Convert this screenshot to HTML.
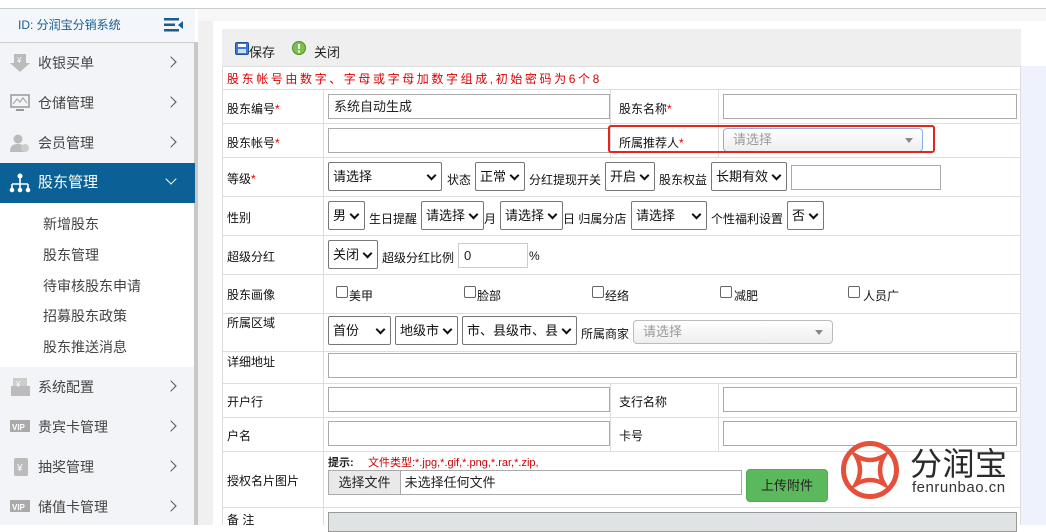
<!DOCTYPE html><html><head><meta charset="utf-8"><style>
*{box-sizing:border-box;margin:0;padding:0}
body{width:1046px;height:525px;overflow:hidden;background:#fff;font-family:"Liberation Sans","Noto Sans CJK SC",sans-serif;font-size:12px;color:#222;position:relative}
.a{position:absolute}
.side{left:0;top:9px;width:195px;height:516px;background:#f3f4f8}
.mi{position:absolute;left:0;width:195px;height:40px;font-size:14px;color:#444;line-height:40px}
.mi .t{position:absolute;left:38px}
.mi .ar{position:absolute;left:167px;top:15px;width:8px;height:8px;border-right:1.3px solid #555;border-top:1.3px solid #555;transform:rotate(45deg)}
.sub{position:absolute;left:43px;font-size:14px;color:#444}
.lbl{position:absolute;font-size:12px;color:#111}
.req{color:#d00}
.inp{position:absolute;border:1px solid #aaa;background:#fff;height:25px;font-size:13px;line-height:23px;padding-left:5px}
.sel{position:absolute;border:1px solid #777;border-radius:2px;background:#fff;height:29px;font-size:13px;line-height:27px;padding-left:4px;color:#111}
.sel:after{content:"";position:absolute;right:6px;top:9px;width:5px;height:5px;border-right:2px solid #111;border-bottom:2px solid #111;transform:rotate(45deg)}
.hl{position:absolute;left:222px;width:799px;height:1px;background:#ddd}
.vl{position:absolute;width:1px;background:#ddd}
.cb{position:absolute;width:12px;height:12px;border:1px solid #666;border-radius:2px;background:#fff}
.ch{position:absolute;border:1px solid #bbb;border-radius:4px;height:24px;background:linear-gradient(#fff,#eee);color:#999;font-size:13px;line-height:22px;padding-left:9px}
.ch:after{content:"";position:absolute;right:9px;top:9px;border-left:4px solid transparent;border-right:4px solid transparent;border-top:5px solid #888}
</style></head><body>
<div class="a" style="left:0;top:8px;width:1046px;height:1px;background:#ccc"></div>
<div class="a side"></div>
<div class="a" style="left:0;top:9px;width:195px;height:33px;background:#f3f6fa"></div>
<div class="a" style="left:18px;top:16px;font-size:12px;color:#1a5d8f">ID: 分润宝分销系统</div>
<svg class="a" style="left:164px;top:18px" width="20" height="14"><rect x="0" y="0" width="15" height="2.5" fill="#1a5d8f"/><rect x="0" y="5.5" width="11" height="2.5" fill="#1a5d8f"/><rect x="0" y="11" width="15" height="2.5" fill="#1a5d8f"/><path d="M19 3v8l-5-4z" fill="#1a5d8f"/></svg>
<div class="a" style="left:0;top:42px;width:195px;height:1px;background:#ccc"></div>
<div class="a" style="left:194px;top:42px;width:4px;height:483px;background:#c8c8c8"></div>
<div class="a" style="left:198px;top:9px;width:848px;height:516px;background:#f0f0f0"></div>
<div class="a" style="left:198px;top:9px;width:848px;height:12px;background:#f7f7f7"></div>
<div class="a" style="left:213px;top:21px;width:833px;height:504px;background:#fff"></div>
<div class="a" style="left:222px;top:29px;width:799px;height:37px;background:#efefef"></div>
<div class="a" style="left:1021px;top:66px;width:25px;height:459px;background:#eef2fc"></div>

<div class="mi" style="top:43px"><svg class="a" style="left:10px;top:11px" width="20" height="18"><path d="M4 0h12v9h4l-10 9-10-9h4z" fill="#bbb"/><text x="7" y="9" font-size="8" fill="#fff">¥</text></svg><span class="t">收银买单</span><i class="ar"></i></div>
<div class="mi" style="top:83px"><svg class="a" style="left:10px;top:11px" width="20" height="18"><rect x="1" y="1" width="18" height="12" fill="none" stroke="#999" stroke-width="1.5"/><path d="M3 10l4-5 3 3 3-4 4 5" fill="none" stroke="#999"/><rect x="6" y="15" width="8" height="2" fill="#999"/></svg><span class="t">仓储管理</span><i class="ar"></i></div>
<div class="mi" style="top:123px"><svg class="a" style="left:10px;top:11px" width="20" height="18"><circle cx="8" cy="5" r="4.5" fill="#bbb"/><path d="M0 18c0-7 4-8 8-8s6 2 7 3v5z" fill="#bbb"/><circle cx="15" cy="14" r="4" fill="#ccc"/></svg><span class="t">会员管理</span><i class="ar"></i></div>
<div class="mi" style="top:163px;background:#0b6195;color:#fff"><svg class="a" style="left:9px;top:10px" width="22" height="20"><circle cx="11" cy="3" r="2.5" fill="#fff"/><path d="M11 5v6M3 11h16M3 11v5M11 11v5M19 11v5" stroke="#fff" stroke-width="1.6" fill="none"/><circle cx="3" cy="17" r="2.3" fill="#fff"/><circle cx="11" cy="17" r="2.3" fill="#fff"/><circle cx="19" cy="17" r="2.3" fill="#fff"/></svg><span class="t" style="font-size:15px">股东管理</span><i class="ar" style="border-color:#fff;transform:rotate(135deg);top:12px"></i></div>
<div class="a" style="left:0;top:203px;width:194px;height:164px;background:#fff"></div>
<div class="sub" style="top:214px">新增股东</div>
<div class="sub" style="top:245px">股东管理</div>
<div class="sub" style="top:276px">待审核股东申请</div>
<div class="sub" style="top:306px">招募股东政策</div>
<div class="sub" style="top:337px">股东推送消息</div>
<div class="mi" style="top:367px"><svg class="a" style="left:11px;top:11px" width="20" height="18"><rect x="2" y="0" width="14" height="11" fill="#ccc"/><rect x="0" y="8" width="19" height="10" fill="#bbb"/><text x="5" y="9" font-size="8" fill="#fff">¥</text></svg><span class="t">系统配置</span><i class="ar"></i></div>
<div class="mi" style="top:407px"><svg class="a" style="left:10px;top:13px" width="20" height="14"><rect width="20" height="12" fill="#aaa"/><text x="2" y="10" font-size="8" font-weight="bold" fill="#fff">VIP</text></svg><span class="t">贵宾卡管理</span><i class="ar"></i></div>
<div class="mi" style="top:447px"><svg class="a" style="left:12px;top:11px" width="18" height="18"><rect x="2" y="0" width="14" height="18" rx="2" fill="#bbb"/><text x="5" y="13" font-size="10" fill="#fff">¥</text></svg><span class="t">抽奖管理</span><i class="ar"></i></div>
<div class="mi" style="top:487px"><svg class="a" style="left:10px;top:13px" width="20" height="14"><rect width="20" height="12" fill="#aaa"/><text x="2" y="10" font-size="8" font-weight="bold" fill="#fff">VIP</text></svg><span class="t">储值卡管理</span><i class="ar"></i></div>

<svg class="a" style="left:235px;top:42px" width="14" height="13"><rect x="0.5" y="0.5" width="13" height="12" rx="1.5" fill="#3b7ad8" stroke="#1d4f9a"/><rect x="3" y="2" width="8" height="3" fill="#fff"/><rect x="3" y="7" width="8" height="4" fill="#cde"/></svg>
<div class="a" style="left:249px;top:42px;font-size:13px">保存</div>
<svg class="a" style="left:292px;top:41px" width="14" height="14"><circle cx="7" cy="7" r="6.5" fill="#7cc24a" stroke="#4a8f2a"/><rect x="6" y="3" width="2" height="5" fill="#fff"/><rect x="6" y="9.5" width="2" height="2" fill="#fff"/></svg>
<div class="a" style="left:314px;top:42px;font-size:13px">关闭</div>

<div class="a" style="left:222px;top:66px;width:799px;height:459px;border:1px solid #ddd;border-bottom:0"></div>
<div class="hl" style="top:89px"></div><div class="hl" style="top:123px"></div><div class="hl" style="top:157px"></div><div class="hl" style="top:196px"></div><div class="hl" style="top:235px"></div><div class="hl" style="top:274px"></div><div class="hl" style="top:313px"></div><div class="hl" style="top:351px"></div><div class="hl" style="top:383px"></div><div class="hl" style="top:417px"></div><div class="hl" style="top:451px"></div><div class="hl" style="top:507px"></div>
<div class="vl" style="left:323px;top:89px;height:436px"></div>
<div class="vl" style="left:610px;top:89px;height:68px"></div><div class="vl" style="left:718px;top:89px;height:68px"></div>
<div class="vl" style="left:610px;top:383px;height:68px"></div><div class="vl" style="left:718px;top:383px;height:68px"></div>

<div class="a" style="left:227px;top:70px;color:#d00;font-size:12px;letter-spacing:2.6px">股东帐号由数字、字母或字母加数字组成,初始密码为6个8</div>
<div class="lbl" style="left:227px;top:100px">股东编号<span class="req">*</span></div>
<div class="inp" style="left:328px;top:94px;width:282px">系统自动生成</div>
<div class="lbl" style="left:619px;top:100px">股东名称<span class="req">*</span></div>
<div class="inp" style="left:723px;top:94px;width:294px"></div>
<div class="lbl" style="left:227px;top:134px">股东帐号<span class="req">*</span></div>
<div class="inp" style="left:328px;top:128px;width:282px"></div>
<div class="lbl" style="left:619px;top:134px">所属推荐人<span class="req">*</span></div>
<div class="ch" style="left:723px;top:128px;width:200px;border-color:#8ab0e8">请选择</div>
<div class="a" style="left:608px;top:125px;width:327px;height:28px;border:2.5px solid #e3261d;border-radius:3px"></div>

<div class="lbl" style="left:227px;top:170px">等级<span class="req">*</span></div>
<div class="sel" style="left:328px;top:162px;width:114px">请选择</div>
<div class="lbl" style="left:447px;top:171px">状态</div>
<div class="sel" style="left:475px;top:162px;width:50px">正常</div>
<div class="lbl" style="left:529px;top:171px">分红提现开关</div>
<div class="sel" style="left:605px;top:162px;width:50px">开启</div>
<div class="lbl" style="left:659px;top:171px">股东权益</div>
<div class="sel" style="left:711px;top:162px;width:76px">长期有效</div>
<div class="inp" style="left:791px;top:165px;width:150px"></div>

<div class="lbl" style="left:227px;top:209px">性别</div>
<div class="sel" style="left:328px;top:201px;width:37px">男</div>
<div class="lbl" style="left:369px;top:210px">生日提醒</div>
<div class="sel" style="left:421px;top:201px;width:63px">请选择</div>
<div class="lbl" style="left:484px;top:210px">月</div>
<div class="sel" style="left:500px;top:201px;width:63px">请选择</div>
<div class="lbl" style="left:563px;top:210px">日 归属分店</div>
<div class="sel" style="left:631px;top:201px;width:76px">请选择</div>
<div class="lbl" style="left:711px;top:210px">个性福利设置</div>
<div class="sel" style="left:787px;top:201px;width:37px">否</div>

<div class="lbl" style="left:227px;top:248px">超级分红</div>
<div class="sel" style="left:328px;top:240px;width:50px">关闭</div>
<div class="lbl" style="left:382px;top:249px">超级分红比例</div>
<div class="inp" style="left:458px;top:243px;width:70px;height:25px;border-color:#ccc">0</div>
<div class="lbl" style="left:529px;top:249px">%</div>

<div class="lbl" style="left:227px;top:286px">股东画像</div>
<div class="cb" style="left:336px;top:286px"></div><div class="lbl" style="left:349px;top:287px">美甲</div>
<div class="cb" style="left:464px;top:286px"></div><div class="lbl" style="left:477px;top:287px">脸部</div>
<div class="cb" style="left:592px;top:286px"></div><div class="lbl" style="left:605px;top:287px">经络</div>
<div class="cb" style="left:720px;top:286px"></div><div class="lbl" style="left:734px;top:287px">减肥</div>
<div class="cb" style="left:848px;top:286px"></div><div class="lbl" style="left:863px;top:287px">人员广</div>

<div class="lbl" style="left:227px;top:314px">所属区域</div>
<div class="sel" style="left:328px;top:316px;width:63px">首份</div>
<div class="sel" style="left:395px;top:316px;width:63px">地级市</div>
<div class="sel" style="left:462px;top:316px;width:115px">市、县级市、县</div>
<div class="lbl" style="left:581px;top:325px">所属商家</div>
<div class="ch" style="left:633px;top:320px;width:200px">请选择</div>

<div class="lbl" style="left:227px;top:353px">详细地址</div>
<div class="inp" style="left:328px;top:353px;width:689px"></div>
<div class="lbl" style="left:227px;top:393px">开户行</div>
<div class="inp" style="left:328px;top:387px;width:282px"></div>
<div class="lbl" style="left:619px;top:393px">支行名称</div>
<div class="inp" style="left:723px;top:387px;width:294px"></div>
<div class="lbl" style="left:227px;top:427px">户名</div>
<div class="inp" style="left:328px;top:421px;width:282px"></div>
<div class="lbl" style="left:619px;top:427px">卡号</div>
<div class="inp" style="left:723px;top:421px;width:294px"></div>

<div class="lbl" style="left:227px;top:472px">授权名片图片</div>
<div class="a" style="left:328px;top:454px;font-size:11px;font-weight:bold">提示:</div>
<div class="a" style="left:368px;top:454px;font-size:11px;color:#c00">文件类型:*.jpg,*.gif,*.png,*.rar,*.zip,</div>
<div class="inp" style="left:328px;top:470px;width:414px;height:25px;padding-left:0;border-color:#aaa"><span style="display:inline-block;height:23px;width:72px;background:#e9e9e9;border-right:1px solid #aaa;text-align:center">选择文件</span> 未选择任何文件</div>
<div class="a" style="left:746px;top:469px;width:82px;height:33px;background:#5cb85c;border:1px solid #4cae4c;border-radius:4px;color:#222;font-size:13px;text-align:center;line-height:31px">上传附件</div>
<div class="lbl" style="left:227px;top:511px">备 注</div>
<div class="a" style="left:328px;top:512px;width:689px;height:20px;background:#e0e3e4;border:1px solid #999"></div>

<svg class="a" style="left:840px;top:440px" width="60" height="60"><circle cx="30" cy="30" r="26.5" fill="none" stroke="#e5503a" stroke-width="5"/><path d="M16 16Q30 24 44 16Q36 30 44 44Q30 36 16 44Q24 30 16 16Z" fill="none" stroke="#e5503a" stroke-width="4.5"/></svg>
<div class="a" style="left:910px;top:439px;font-size:32px;color:#2a2a2a;letter-spacing:0.5px">分润宝</div>
<div class="a" style="left:912px;top:479px;font-size:15px;color:#333;letter-spacing:0.5px">fenrunbao.cn</div>
</body></html>
